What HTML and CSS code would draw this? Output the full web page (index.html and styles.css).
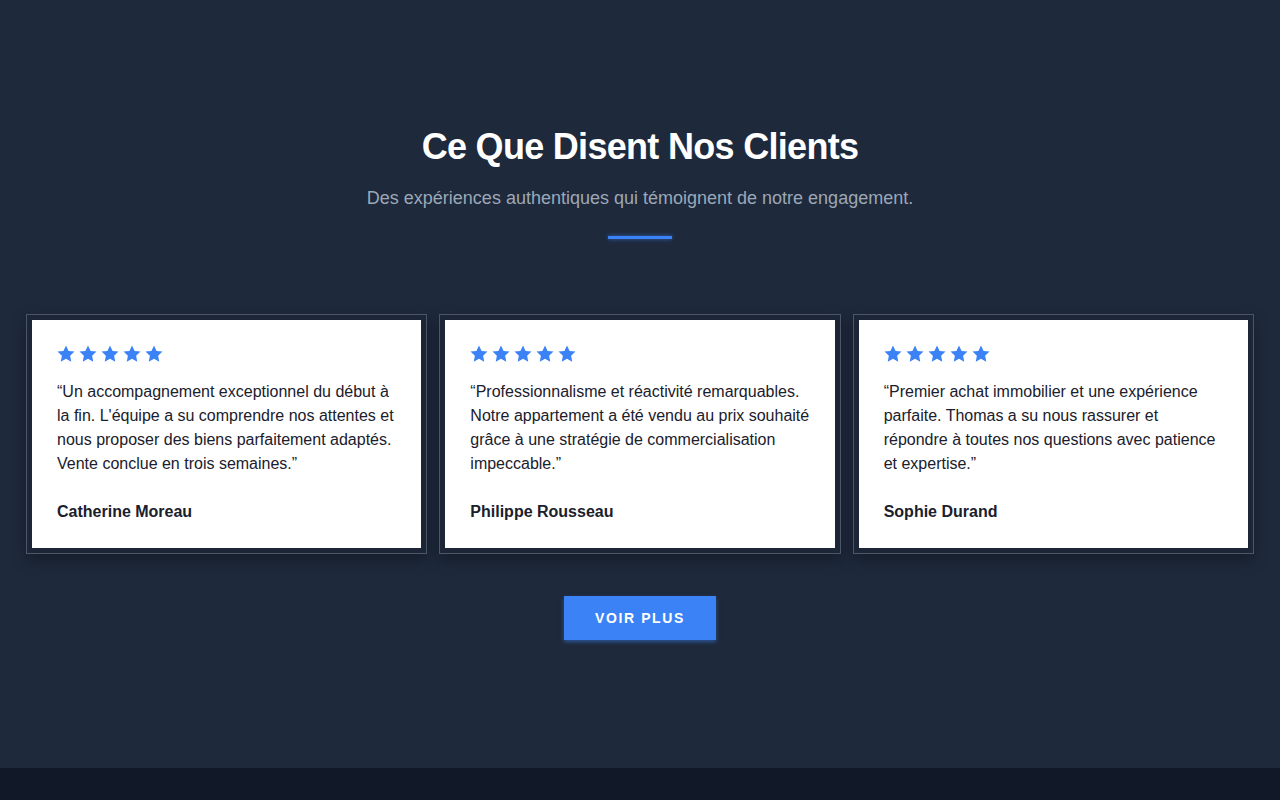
FILE: index.html
```html
<!DOCTYPE html>
<html lang="fr">
<head>
<meta charset="utf-8">
<title>Témoignages</title>
<link rel="stylesheet" href="styles.css">
</head>
<body>
<section class="testimonials">
  <header class="head">
    <h2 class="title">Ce Que Disent Nos Clients</h2>
    <p class="subtitle">Des expériences authentiques qui témoignent de notre engagement.</p>
    <div class="divider"></div>
  </header>
  <div class="grid">
    <article class="frame">
      <div class="card">
        <div class="stars">
          <svg viewBox="2 2 20 19"><path d="M12 2.5l2.9 6.1 6.6.8-4.9 4.6 1.3 6.6L12 17.3l-5.9 3.3 1.3-6.6-4.9-4.6 6.6-.8z"/></svg>
          <svg viewBox="2 2 20 19"><path d="M12 2.5l2.9 6.1 6.6.8-4.9 4.6 1.3 6.6L12 17.3l-5.9 3.3 1.3-6.6-4.9-4.6 6.6-.8z"/></svg>
          <svg viewBox="2 2 20 19"><path d="M12 2.5l2.9 6.1 6.6.8-4.9 4.6 1.3 6.6L12 17.3l-5.9 3.3 1.3-6.6-4.9-4.6 6.6-.8z"/></svg>
          <svg viewBox="2 2 20 19"><path d="M12 2.5l2.9 6.1 6.6.8-4.9 4.6 1.3 6.6L12 17.3l-5.9 3.3 1.3-6.6-4.9-4.6 6.6-.8z"/></svg>
          <svg viewBox="2 2 20 19"><path d="M12 2.5l2.9 6.1 6.6.8-4.9 4.6 1.3 6.6L12 17.3l-5.9 3.3 1.3-6.6-4.9-4.6 6.6-.8z"/></svg>
        </div>
        <p class="quote">“Un accompagnement exceptionnel du début à la fin. L'équipe a su comprendre nos attentes et nous proposer des biens parfaitement adaptés. Vente conclue en trois semaines.”</p>
        <p class="name">Catherine Moreau</p>
      </div>
    </article>
    <article class="frame">
      <div class="card">
        <div class="stars">
          <svg viewBox="2 2 20 19"><path d="M12 2.5l2.9 6.1 6.6.8-4.9 4.6 1.3 6.6L12 17.3l-5.9 3.3 1.3-6.6-4.9-4.6 6.6-.8z"/></svg>
          <svg viewBox="2 2 20 19"><path d="M12 2.5l2.9 6.1 6.6.8-4.9 4.6 1.3 6.6L12 17.3l-5.9 3.3 1.3-6.6-4.9-4.6 6.6-.8z"/></svg>
          <svg viewBox="2 2 20 19"><path d="M12 2.5l2.9 6.1 6.6.8-4.9 4.6 1.3 6.6L12 17.3l-5.9 3.3 1.3-6.6-4.9-4.6 6.6-.8z"/></svg>
          <svg viewBox="2 2 20 19"><path d="M12 2.5l2.9 6.1 6.6.8-4.9 4.6 1.3 6.6L12 17.3l-5.9 3.3 1.3-6.6-4.9-4.6 6.6-.8z"/></svg>
          <svg viewBox="2 2 20 19"><path d="M12 2.5l2.9 6.1 6.6.8-4.9 4.6 1.3 6.6L12 17.3l-5.9 3.3 1.3-6.6-4.9-4.6 6.6-.8z"/></svg>
        </div>
        <p class="quote">“Professionnalisme et réactivité remarquables. Notre appartement a été vendu au prix souhaité grâce à une stratégie de commercialisation impeccable.”</p>
        <p class="name">Philippe Rousseau</p>
      </div>
    </article>
    <article class="frame">
      <div class="card">
        <div class="stars">
          <svg viewBox="2 2 20 19"><path d="M12 2.5l2.9 6.1 6.6.8-4.9 4.6 1.3 6.6L12 17.3l-5.9 3.3 1.3-6.6-4.9-4.6 6.6-.8z"/></svg>
          <svg viewBox="2 2 20 19"><path d="M12 2.5l2.9 6.1 6.6.8-4.9 4.6 1.3 6.6L12 17.3l-5.9 3.3 1.3-6.6-4.9-4.6 6.6-.8z"/></svg>
          <svg viewBox="2 2 20 19"><path d="M12 2.5l2.9 6.1 6.6.8-4.9 4.6 1.3 6.6L12 17.3l-5.9 3.3 1.3-6.6-4.9-4.6 6.6-.8z"/></svg>
          <svg viewBox="2 2 20 19"><path d="M12 2.5l2.9 6.1 6.6.8-4.9 4.6 1.3 6.6L12 17.3l-5.9 3.3 1.3-6.6-4.9-4.6 6.6-.8z"/></svg>
          <svg viewBox="2 2 20 19"><path d="M12 2.5l2.9 6.1 6.6.8-4.9 4.6 1.3 6.6L12 17.3l-5.9 3.3 1.3-6.6-4.9-4.6 6.6-.8z"/></svg>
        </div>
        <p class="quote">“Premier achat immobilier et une expérience parfaite. Thomas a su nous rassurer et répondre à toutes nos questions avec patience et expertise.”</p>
        <p class="name">Sophie Durand</p>
      </div>
    </article>
  </div>
  <div class="actions">
    <a class="btn" href="#">VOIR PLUS</a>
  </div>
</section>
<footer class="footer"></footer>
</body>
</html>
```

FILE: styles.css
```css
* { box-sizing: border-box; }
html, body { margin: 0; padding: 0; }
body {
  background: #1e293b;
  font-family: "Liberation Sans", Arial, Helvetica, sans-serif;
  color: #ffffff;
}
.testimonials {
  height: 768px;
  padding: 125px 26px 0;
  background: #1e293b;
}
.head { text-align: center; }
.title {
  margin: 0;
  font-size: 36px;
  line-height: 44px;
  font-weight: 700;
  color: #ffffff;
  letter-spacing: -0.7px;
}
.subtitle {
  margin: 15px 0 0;
  font-size: 18px;
  line-height: 28px;
  color: #9ca8b8;
}
.divider {
  width: 64px;
  height: 3px;
  margin: 24px auto 0;
  background: #3b82f6;
  box-shadow: 0 0 4px rgba(59, 130, 246, 0.7);
}
.grid {
  margin-top: 75px;
  display: grid;
  grid-template-columns: repeat(3, 1fr);
  gap: 12px;
}
.frame {
  border: 1px solid #4b5768;
  padding: 5px;
  background: #1c2636;
  box-shadow: 0 6px 14px rgba(0, 0, 0, 0.3);
}
.card {
  background: #ffffff;
  padding: 25px 24px 24px 25px;
  color: #1a202c;
}
.stars {
  display: flex;
  gap: 4px;
  height: 17px;
}
.stars svg {
  width: 18px;
  height: 17px;
  fill: #3b82f6;
}
.quote {
  margin: 18px 0 0;
  font-size: 16px;
  line-height: 24px;
  color: #1a202c;
}
.name {
  margin: 24px 0 0;
  font-size: 16px;
  line-height: 24px;
  font-weight: 700;
  color: #1a202c;
}
.actions {
  margin-top: 42px;
  display: flex;
  justify-content: center;
}
.btn {
  display: flex;
  align-items: center;
  justify-content: center;
  width: 152px;
  height: 44px;
  background: #3b82f6;
  color: #ffffff;
  text-decoration: none;
  font-size: 14px;
  font-weight: 700;
  letter-spacing: 1.6px;
  box-shadow: 0 2px 4px rgba(59, 130, 246, 0.5);
}
.footer {
  height: 32px;
  background: #111827;
}
```
